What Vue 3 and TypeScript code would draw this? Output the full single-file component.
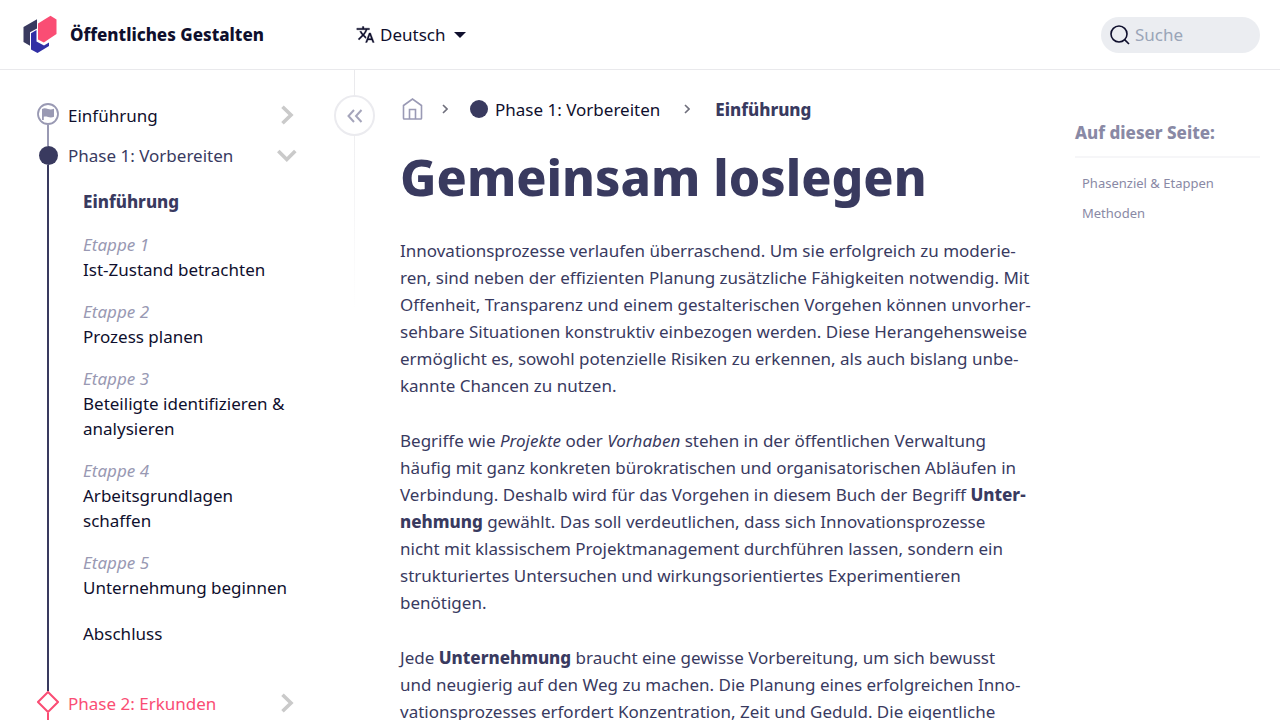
<script setup lang="ts">
interface Stage {
  label?: string
  title: string
  kind: 'current' | 'stage' | 'plain'
}

const stages: Stage[] = [
  { title: 'Einführung', kind: 'current' },
  { label: 'Etappe 1', title: 'Ist-Zustand betrachten', kind: 'stage' },
  { label: 'Etappe 2', title: 'Prozess planen', kind: 'stage' },
  { label: 'Etappe 3', title: 'Beteiligte identifizieren & analysieren', kind: 'stage' },
  { label: 'Etappe 4', title: 'Arbeitsgrundlagen schaffen', kind: 'stage' },
  { label: 'Etappe 5', title: 'Unternehmung beginnen', kind: 'stage' },
  { title: 'Abschluss', kind: 'plain' },
]

const tocEntries: string[] = ['Phasenziel & Etappen', 'Methoden']
</script>

<template>
  <div class="page">
    <header class="topbar">
      <a class="brand" href="#">
        <svg class="logo" viewBox="22 15 36 40" aria-hidden="true">
          <path d="M23.500 27 37 19.300V28.500L30 32.300V45.700L23.500 42Z" fill="#393a5f" />
          <path d="M31 33.300 36.500 30V41.500L44 45.500 49 42.500V46L37.500 53 31 49.500Z" fill="#312fa5" />
          <path d="M50.500 15.700 56.500 19.500V34L43.800 42.600 38 39.500V23.500Z" fill="#fa4d74" />
        </svg>
        <span>Öffentliches Gestalten</span>
      </a>
      <button class="language" type="button">
        <svg class="translate" viewBox="0 0 24 24" aria-hidden="true">
          <path
            d="M12.870 15.070l-2.540-2.510.030-.030A17.520 17.520 0 0 0 14.070 6H17V4h-7V2H8v2H1v2h11.170C11.500 7.920 10.440 9.750 9 11.350 8.070 10.320 7.300 9.190 6.690 8h-2c.730 1.630 1.730 3.170 2.980 4.560l-5.090 5.020L4 19l5-5 3.110 3.110.760-2.040zM18.500 10h-2L12 22h2l1.120-3h4.750L21 22h2l-4.500-12zm-2.620 7l1.620-4.330L19.120 17h-3.240z"
            fill="currentColor"
            stroke="currentColor"
            stroke-width="0.4"
          />
        </svg>
        <span>Deutsch</span>
        <svg class="caret" viewBox="0 0 12 6" aria-hidden="true"><path d="M0 0h12L6 6Z" fill="currentColor" /></svg>
      </button>
      <label class="search">
        <svg class="lens" viewBox="0 0 20 20" aria-hidden="true">
          <circle cx="9" cy="9" r="8" />
          <path d="M14.600 14.600 19 19" />
        </svg>
        <input type="search" placeholder="Suche" aria-label="Suche" />
      </label>
    </header>

    <div class="columns">
      <aside class="sidebar">
        <button class="collapse" type="button" aria-label="Seitenleiste einklappen">
          <svg viewBox="0 0 16 14" aria-hidden="true"><path d="M7 1 1.500 7 7 13M14.500 1 9 7l5.500 6" /></svg>
        </button>
        <nav aria-label="Phasen">
          <ul class="tree">
            <li class="node">
              <div class="rail">
                <svg class="flag" viewBox="0 0 22 22" aria-hidden="true">
                  <circle cx="11" cy="11" r="10" fill="none" stroke="#9999b3" stroke-width="1.800" />
                  <path d="M5 6c2-1 4-.700 6 0s4 .500 6-.200v8c-2 .900-4 .900-6 .200s-3-.500-4.200-.200V17H5Z" fill="#9999b3" />
                </svg>
                <span class="line soft"></span>
              </div>
              <div class="row">
                <a href="#">Einführung</a>
                <button type="button" aria-label="Einführung aufklappen">
                  <svg viewBox="0 0 20 20" aria-hidden="true"><path d="m5.500 1.800 8.500 8.200-8.500 8.200" /></svg>
                </button>
              </div>
            </li>
            <li class="node open">
              <div class="rail">
                <span class="lead soft"></span>
                <span class="dot"></span>
                <span class="line dark"></span>
              </div>
              <div>
                <div class="row">
                  <a href="#">Phase 1: Vorbereiten</a>
                  <button type="button" aria-label="Phase 1 zuklappen">
                    <svg viewBox="0 0 20 20" aria-hidden="true"><path d="m1.300 6 8.500 8.500L18.300 6" /></svg>
                  </button>
                </div>
                <ul class="stages">
                  <li v-for="stage in stages" :key="stage.title" :class="stage.kind">
                    <a href="#">
                      <em v-if="stage.label">{{ stage.label }}</em>
                      <span>{{ stage.title }}</span>
                    </a>
                  </li>
                </ul>
              </div>
            </li>
            <li class="node next">
              <div class="rail">
                <span class="lead dark"></span>
                <svg class="diamond" viewBox="0 0 22 22" aria-hidden="true">
                  <path d="M11 1 21 11 11 21 1 11Z" fill="none" stroke="#fa4d74" stroke-width="2" />
                </svg>
                <span class="line red"></span>
              </div>
              <div class="row">
                <a href="#">Phase 2: Erkunden</a>
                <button type="button" aria-label="Phase 2 aufklappen">
                  <svg viewBox="0 0 20 20" aria-hidden="true"><path d="m5.500 1.800 8.500 8.200-8.500 8.200" /></svg>
                </button>
              </div>
            </li>
          </ul>
        </nav>
      </aside>

      <main class="content">
        <nav class="crumbs" aria-label="Brotkrumen">
          <a class="home" href="#" aria-label="Startseite">
            <svg viewBox="0 0 21 22" aria-hidden="true">
              <path d="M1.500 7.500 10.500 1l9 6.500V20.200q0 .800-.800.800H2.300q-.800 0-.800-.800ZM7.500 21V11.500h6V21" />
            </svg>
          </a>
          <svg class="sep" viewBox="0 0 6 10" aria-hidden="true"><path d="m1 1 4 4-4 4" /></svg>
          <a class="phase" href="#"><span class="bullet"></span>Phase 1: Vorbereiten</a>
          <svg class="sep" viewBox="0 0 6 10" aria-hidden="true"><path d="m1 1 4 4-4 4" /></svg>
          <strong>Einführung</strong>
        </nav>
        <h1>Gemeinsam loslegen</h1>
        <p>
          Innovationsprozesse verlaufen überraschend. Um sie erfolgreich zu moderie-<br />
          ren, sind neben der effizienten Planung zusätzliche Fähigkeiten notwendig. Mit<br />
          Offenheit, Transparenz und einem gestalterischen Vorgehen können unvorher-<br />
          sehbare Situationen konstruktiv einbezogen werden. Diese Herangehensweise<br />
          ermöglicht es, sowohl potenzielle Risiken zu erkennen, als auch bislang unbe-<br />
          kannte Chancen zu nutzen.
        </p>
        <p>
          Begriffe wie <em>Projekte</em> oder <em>Vorhaben</em> stehen in der öffentlichen Verwaltung<br />
          häufig mit ganz konkreten bürokratischen und organisatorischen Abläufen in<br />
          Verbindung. Deshalb wird für das Vorgehen in diesem Buch der Begriff <strong>Unter-</strong><br />
          <strong>nehmung</strong> gewählt. Das soll verdeutlichen, dass sich Innovationsprozesse<br />
          nicht mit klassischem Projektmanagement durchführen lassen, sondern ein<br />
          strukturiertes Untersuchen und wirkungsorientiertes Experimentieren<br />
          benötigen.
        </p>
        <p>
          Jede <strong>Unternehmung</strong> braucht eine gewisse Vorbereitung, um sich bewusst<br />
          und neugierig auf den Weg zu machen. Die Planung eines erfolgreichen Inno-<br />
          vationsprozesses erfordert Konzentration, Zeit und Geduld. Die eigentliche
        </p>
      </main>

      <aside class="toc">
        <h2>Auf dieser Seite:</h2>
        <ul>
          <li v-for="entry in tocEntries" :key="entry"><a href="#">{{ entry }}</a></li>
        </ul>
      </aside>
    </div>
  </div>
</template>

<style>
html {
  scrollbar-width: none;
}
</style>

<style scoped>
.page {
  --ink: #0f0f2d;
  --navy: #393a5f;
  --soft: #9999b3;
  --red: #fa4d74;
  min-height: 100vh;
  background: #fff;
  color: var(--navy);
  font-family: "Noto Sans", "Open Sans", sans-serif;
  font-size: 17px;
  line-height: 25px;
}
a {
  color: inherit;
  text-decoration: none;
}
strong {
  font-weight: 800;
}
ul {
  list-style: none;
  margin: 0;
  padding: 0;
}
button {
  font: inherit;
  color: inherit;
  background: none;
  border: 0;
  padding: 0;
  cursor: pointer;
}
svg {
  display: block;
  flex: none;
}

.topbar {
  display: flex;
  align-items: center;
  box-sizing: border-box;
  height: 70px;
  padding: 0 20px 0 22px;
  border-bottom: 1px solid #e9e9ec;
  color: var(--ink);
}
.brand {
  display: flex;
  align-items: center;
  gap: 12px;
  width: 334px;
  font-weight: 800;
}
.logo {
  width: 36px;
  height: 40px;
}
.language {
  display: flex;
  align-items: center;
  gap: 5px;
}
.translate {
  width: 19px;
  height: 19px;
}
.caret {
  width: 12px;
  height: 6px;
  margin-left: 4px;
}
.search {
  display: flex;
  align-items: center;
  gap: 5px;
  box-sizing: border-box;
  width: 159px;
  height: 36px;
  margin-left: auto;
  padding: 0 12px 0 9px;
  border-radius: 18px;
  background: #ebedf1;
}
.lens {
  width: 20px;
  height: 20px;
  fill: none;
  stroke: var(--ink);
  stroke-width: 1.6;
}
.search input {
  min-width: 0;
  flex: 1;
  border: 0;
  padding: 0;
  outline: 0;
  background: none;
  font: inherit;
  color: var(--ink);
}
.search input::placeholder {
  color: #9aa5b8;
  opacity: 1;
}

.columns {
  display: grid;
  grid-template-columns: 355px minmax(0, 1fr) 185px;
  min-height: calc(100vh - 70px);
  padding-right: 20px;
}
.sidebar {
  position: relative;
  display: flex;
  box-sizing: border-box;
  padding: 25px 58px 0 36px;
  background: linear-gradient(#e9e9ec, #fff) right top / 1px 240px no-repeat;
}
.sidebar nav {
  display: flex;
  flex: 1;
}
.collapse {
  position: absolute;
  top: 25px;
  right: -20px;
  display: grid;
  place-items: center;
  box-sizing: border-box;
  width: 41px;
  height: 41px;
  border: 2px solid #ebebef;
  border-radius: 50%;
  background: #fff;
}
.collapse svg {
  width: 16px;
  height: 14px;
  fill: none;
  stroke: #a5a5bb;
  stroke-width: 2;
}
.tree {
  display: flex;
  flex: 1;
  flex-direction: column;
}
.node {
  display: grid;
  grid-template-columns: 24px minmax(0, 1fr);
  column-gap: 8px;
  color: var(--ink);
}
.node:last-child {
  flex: 1;
}
.rail {
  display: flex;
  flex-direction: column;
  align-items: center;
}
.flag {
  width: 22px;
  height: 22px;
  margin-top: 8px;
}
.diamond {
  width: 22px;
  height: 22px;
}
.dot {
  width: 19px;
  height: 19px;
  border-radius: 50%;
  background: var(--navy);
}
.lead {
  width: 2px;
  height: 11px;
}
.next .lead {
  height: 8px;
}
.line {
  flex: 1;
  width: 2px;
}
.soft {
  background: var(--soft);
}
.dark {
  background: var(--navy);
}
.red {
  background: var(--red);
}
.row {
  display: flex;
  align-items: center;
  justify-content: space-between;
  height: 40px;
}
.row svg {
  width: 20px;
  height: 20px;
  fill: none;
  stroke: #cacaca;
  stroke-width: 3.6;
}
.open .row {
  color: var(--navy);
}
.next .row {
  color: var(--red);
}
.stages {
  display: flex;
  flex-direction: column;
  gap: 17px;
  padding: 14px 0 37px 15px;
}
.stages a {
  display: flex;
  flex-direction: column;
}
.stages em {
  color: var(--soft);
}
.stages .current {
  padding-bottom: 1px;
  color: var(--navy);
  font-weight: 800;
}
.stages .plain {
  padding-top: 4px;
}

.content {
  padding: 25px 45px 0;
}
.crumbs {
  display: flex;
  align-items: center;
  height: 28px;
  color: var(--ink);
}
.home svg {
  width: 21px;
  height: 22px;
  margin-left: 2px;
  fill: none;
  stroke: #9a9ab5;
  stroke-width: 1.6;
}
.sep {
  width: 6px;
  height: 10px;
  margin: 0 22px 0 19px;
  fill: none;
  stroke: #6f6f7c;
  stroke-width: 1.6;
}
.phase {
  display: flex;
  align-items: center;
  gap: 7px;
}
.bullet {
  width: 18px;
  height: 18px;
  border-radius: 50%;
  background: var(--navy);
}
.phase + .sep {
  margin: 0 25px 0 24px;
}
.crumbs strong {
  color: var(--navy);
}
h1 {
  margin: 24px 0 30px;
  font-size: 50px;
  font-weight: 800;
  line-height: 60px;
  white-space: nowrap;
}
.content p {
  margin: 0 0 28px;
  line-height: 27px;
  white-space: nowrap;
}

.toc {
  padding-top: 50px;
  color: #8989a5;
}
.toc h2 {
  margin: 0 0 10px;
  padding-bottom: 11px;
  border-bottom: 2px solid #f6f6f8;
  font-size: 17px;
  font-weight: 800;
  line-height: 25px;
}
.toc ul {
  padding-left: 7px;
  font-size: 13px;
  line-height: 30px;
}
</style>
